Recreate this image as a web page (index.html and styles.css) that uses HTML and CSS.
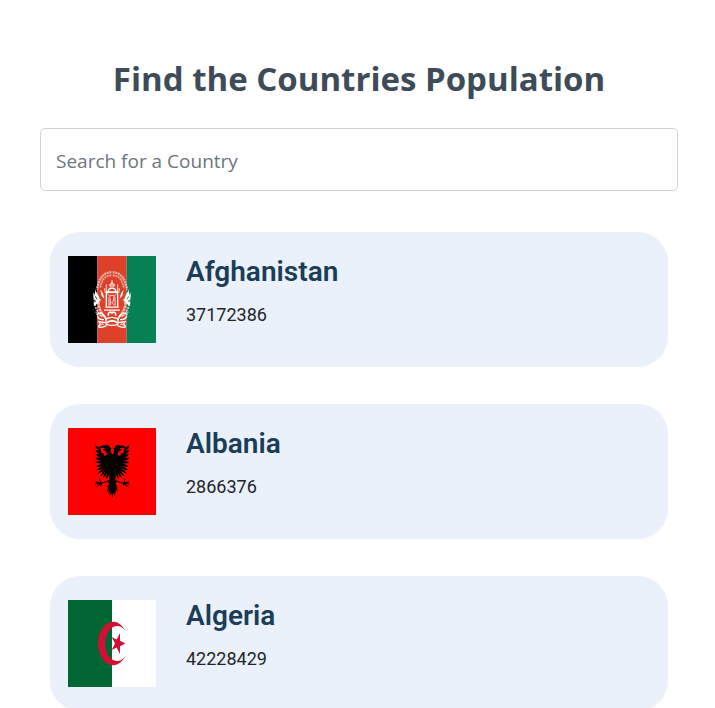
FILE: index.html
```html
<!DOCTYPE html>
<html lang="en">
<head>
  <meta charset="utf-8">
  <meta name="viewport" content="width=device-width, initial-scale=1">
  <title>Find the Countries Population</title>
  <link rel="stylesheet" href="styles.css">
</head>
<body>
  <main class="page">
    <h1 class="title">Find the Countries Population</h1>
    <input class="search" type="search" placeholder="Search for a Country" aria-label="Search for a Country">
    <ul class="countries">
      <li class="country">
        <svg class="flag" viewBox="0 0 264 264" preserveAspectRatio="none" role="img" aria-label="Flag of Afghanistan">
          <path fill="#000" d="M0 0h88v264H0z"/>
          <path fill="#de4129" d="M88 0h88v264H88z"/>
          <path fill="#058153" d="M176 0h88v264h-88z"/>
          <g fill="none" stroke="#fff">
            <g id="wreath">
              <path stroke-width="7" stroke-dasharray="6 2" opacity=".6" d="M130 50C104 48 91 75 87 102"/>
              <path stroke-width="5" stroke-dasharray="6 2" opacity=".6" d="M130 59C109 59 101 75 97 96"/>
              <path stroke-width="5" stroke-dasharray="6 3" opacity=".75" d="M79 128c0 24 7 42 22 54"/>
              <path stroke-width="7" stroke-dasharray="8 2" opacity=".7" d="M91 130c-1 22 6 42 22 58"/>
              <path fill="#fff" stroke="none" d="M83 98c-1 12 6 15 9 24l6 17-9-7-9-14zM76 110l8 18 10 14-10-4-8-12zM77 143l12-9 11-4-10 13-12 9zM97 102l8 12 4 15-8-8z"/>
              <path stroke-width="4" d="M86 178c4-7 17-6 22 2l8 14M88 181c2 10 8 13 20 12M91 215c8 3 17 1 25-4M91 215l6-9-4-7 20 3"/>
              <path stroke-width="3" opacity=".75" d="M82 170l22 15M97 198l12 14M98 212l8-11"/>
            </g>
            <use href="#wreath" transform="matrix(-1 0 0 1 264 0)"/>
            <path stroke-width="4" d="M108 164h48M112 155h40M115 153v-43h34v43M110 109h44M120 108c2-14 22-14 24 0"/>
            <path stroke-width="3" opacity=".8" d="M123 153v-24c0-13 18-13 18 0v24M127 129v20M137 126v10l-6 5 7 7M118 115l7 5M146 115l-7 5M115 107V86M149 107V86M110 106v-8M154 106v-8M127 95v-9M137 95v-9"/>
            <path stroke-width="3" d="M132 94V73M124 90c3-10 13-10 16 0"/>
            <path stroke-width="5" d="M121 181c-2-10 6-14 11-8 5-6 13-2 11 8M116 203c9-8 24-8 32 0"/>
            <path stroke-width="4" d="M114 191c11-6 25-6 36 0M114 207c12 5 24 5 36 0M114 191v16M150 191v16"/>
          </g>
        </svg>
        <div class="details">
          <h2 class="name">Afghanistan</h2>
          <p class="population">37172386</p>
        </div>
      </li>
      <li class="country">
        <svg class="flag" viewBox="0 0 264 264" preserveAspectRatio="none" role="img" aria-label="Flag of Albania">
          <path fill="#f00" d="M0 0h264v264H0z"/>
          <g id="half-eagle">
            <path fill="#000" d="M134 82L129 76 127 67 131 63 126 60 123 53 116 51 109 54 101 53 95 57 94 62 104 59 111 63 105 67 112 70 117 77 117 82 110 85 106 77 99 75 99 65 92 58 82 53 84 61 94 69 82 66 86 74 96 80 83 78 88 86 98 90 82 90 88 97 99 99 82 103 90 108 101 107 84 116 92 118 103 115 85 127 94 128 105 122 89 138 98 136 108 128 96 147 105 142 112 132 104 151 112 146 117 137 113 154 119 150 122 140 124 158 120 165 124 170 115 182 122 177 116 193 124 186 121 200 127 192 125 207 130 197 134 213z"/>
            <path fill="none" stroke="#000" stroke-width="3" d="M123 159L113 164 99 168 83 163M99 168L82 170M99 168L85 179M99 168L94 154M100 168L98 176"/>
          </g>
          <use href="#half-eagle" transform="matrix(-1 0 0 1 266 0)"/>
        </svg>
        <div class="details">
          <h2 class="name">Albania</h2>
          <p class="population">2866376</p>
        </div>
      </li>
      <li class="country">
        <svg class="flag" viewBox="0 0 264 264" preserveAspectRatio="none" role="img" aria-label="Flag of Algeria">
          <path fill="#063" d="M0 0h132v264H0z"/>
          <path fill="#fff" d="M132 0h132v264H132z"/>
          <path fill="#d21034" d="M171 92a45 66 0 1 0 0 80 36 53 0 1 1 0-80zM172 132l-16-8 0-24-10 20-15-8 10 20-10 20 15-8 10 20 0-24z"/>
        </svg>
        <div class="details">
          <h2 class="name">Algeria</h2>
          <p class="population">42228429</p>
        </div>
      </li>
    </ul>
  </main>
</body>
</html>
```
FILE: styles.css
```css
* {
  box-sizing: border-box;
}

body {
  margin: 0;
  background: #fff;
  color: #212529;
  font-family: Roboto, sans-serif;
}

.page {
  padding: 52px 37px 40px 40px;
}

.title {
  margin: 0 0 22px;
  color: #3e4c59;
  font-family: "Segoe UI", "Open Sans", sans-serif;
  font-size: 33px;
  font-weight: 700;
  line-height: 54px;
  text-align: center;
}

.search {
  display: block;
  width: 100%;
  height: 63px;
  padding: 2px 15px 0;
  border: 1px solid #ced4da;
  border-radius: 5px;
  background: #fff;
  color: #495057;
  font-family: "Segoe UI", "Open Sans", sans-serif;
  font-size: 19px;
  appearance: none;
}

.search::placeholder {
  color: #6c757d;
  opacity: 1;
}

.countries {
  display: flex;
  flex-direction: column;
  gap: 37px;
  margin: 41px 10px 0;
  padding: 0;
  list-style: none;
}

.country {
  display: flex;
  gap: 30px;
  padding: 24px 18px;
  border-radius: 30px;
  background: #eaf1fb;
}

.flag {
  flex: none;
  width: 88px;
  height: 87px;
}

.name {
  margin: 0 0 13px;
  color: #1b3d57;
  font-size: 28px;
  font-weight: 600;
  line-height: 32px;
}

.population {
  margin: 0;
  font-size: 18px;
  line-height: 28px;
}
```
